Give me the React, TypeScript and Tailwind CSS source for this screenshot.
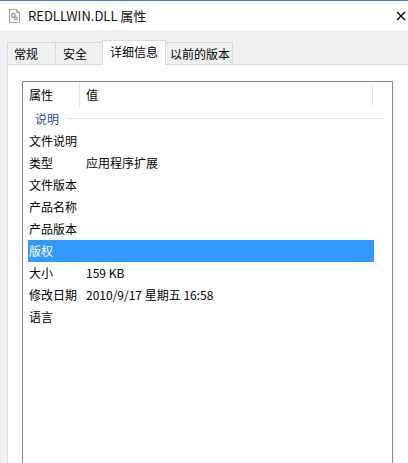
import React from 'react';

const font = { fontFamily: '"Noto Sans CJK SC", "Noto Sans", sans-serif' };

const rows: { label: string; value?: string; selected?: boolean }[] = [
  { label: '文件说明' },
  { label: '类型', value: '应用程序扩展' },
  { label: '文件版本' },
  { label: '产品名称' },
  { label: '产品版本' },
  { label: '版权', selected: true },
  { label: '大小', value: '159 KB' },
  { label: '修改日期', value: '2010/9/17 星期五 16:58' },
  { label: '语言' },
];

const FileIcon = () => (
  <svg width="11" height="14" viewBox="0 0 11 14">
    <path d="M0.5 0.5 H7.5 L10.5 3.5 V13.5 H0.5 Z" fill="#fdfdfd" stroke="#a0a0a0" />
    <path d="M7.5 0.5 V3.5 H10.5" fill="none" stroke="#a0a0a0" />
    <circle cx="4.5" cy="6.5" r="1.8" fill="none" stroke="#8a8a8a" strokeWidth="1.2" />
    <circle cx="7" cy="9.5" r="1.4" fill="none" stroke="#9a9a9a" strokeWidth="1.1" />
  </svg>
);

const App = () => {
  return (
    <div className="w-[408px] h-[463px] overflow-hidden bg-white flex flex-col text-[12px] text-black" style={font}>
      {/* title bar */}
      <div className="h-px shrink-0 bg-[#3b80c6]" />
      <div className="h-[29px] shrink-0 flex items-center relative">
        <div className="ml-[9px] mr-[8px] flex items-center">
          <FileIcon />
        </div>
        <span className="text-[13px] text-[#111]">REDLLWIN.DLL 属性</span>
        <svg className="absolute left-[396px] top-[10px]" width="10" height="10" viewBox="0 0 10 10">
          <path d="M1 1 L9 9 M9 1 L1 9" stroke="#000" strokeWidth="1.3" />
        </svg>
      </div>

      {/* body */}
      <div className="flex-1 min-h-0 bg-[#f0f0f0] pl-[7px] pt-[10px] flex flex-col">
        {/* tabs */}
        <div className="h-[24px] shrink-0 flex items-end">
          <div className="w-[48px] h-[22px] border-l border-t border-[#d9d9d9] pl-[6px] flex items-center">常规</div>
          <div className="w-[47px] h-[22px] border-l border-t border-[#d9d9d9] pl-[7px] flex items-center">安全</div>
          <div className="w-[64px] h-[25px] -mb-px relative z-10 bg-white border-l border-t border-r border-[#d9d9d9] pl-[7px] pb-[3px] flex items-center">详细信息</div>
          <div className="w-[67px] h-[22px] border-t border-r border-[#d9d9d9] bg-[#f0f0f0] pl-[4px] flex items-center">以前的版本</div>
        </div>

        {/* panel */}
        <div className="flex-1 min-h-0 overflow-hidden bg-white border-l border-t border-[#d9d9d9] pl-[14px] pt-[16px]">
          <div className="w-[371px] h-[420px] border border-[#828790] bg-white">
            {/* header */}
            <div className="h-[25px] flex">
              <div className="w-[57px] border-r border-[#e5e5e5] pl-[6px] flex items-center">属性</div>
              <div className="w-[293px] border-r border-[#e5e5e5] pl-[6px] flex items-center">值</div>
            </div>
            {/* group */}
            <div className="h-[23px] flex items-center pl-[12px] pr-[9px]">
              <span className="text-[#2b4aa5]">说明</span>
              <div className="flex-1 h-px bg-[#e3e3e3] ml-[7px]" />
            </div>
            {/* rows */}
            {rows.map((r) => (
              <div
                key={r.label}
                className={
                  r.selected
                    ? 'h-[22px] ml-[5px] w-[346px] pl-[1px] flex items-center bg-[#3399ff] text-white'
                    : 'h-[22px] ml-[5px] w-[346px] pl-[1px] flex items-center'
                }
              >
                <div className="w-[57px] whitespace-nowrap">{r.label}</div>
                {r.value && <div className="whitespace-nowrap">{r.value}</div>}
              </div>
            ))}
          </div>
        </div>
      </div>
    </div>
  );
};

export default App;
